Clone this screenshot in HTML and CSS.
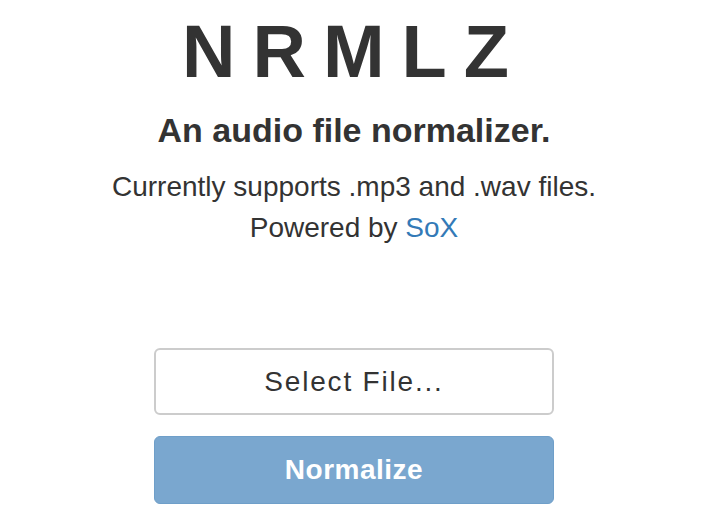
FILE: index.html
```html
<!DOCTYPE html>
<html>
<head>
<meta charset="utf-8">
<link rel="stylesheet" href="styles.css">
</head>
<body>
<main class="page">
  <h1 class="logo">NRMLZ</h1>
  <h2 class="tagline">An audio file normalizer.</h2>
  <p class="info info-first">Currently supports .mp3 and .wav files.</p>
  <p class="info">Powered by <a href="#" class="link">SoX</a></p>
  <div class="actions">
    <button class="btn btn-select">Select File...</button>
    <button class="btn btn-primary" disabled>Normalize</button>
  </div>
</main>
</body>
</html>
```
FILE: styles.css
```css
html, body {
  margin: 0;
  padding: 0;
  background: #fff;
}
body {
  font-family: "Liberation Sans", Arial, sans-serif;
  color: #333;
}
.page {
  width: 708px;
  display: flex;
  flex-direction: column;
  align-items: center;
  text-align: center;
}
.logo {
  margin: 12px 0 0;
  font-size: 74px;
  font-weight: 700;
  line-height: 80px;
  letter-spacing: 17px;
}
.tagline {
  margin: 18px 0 0;
  font-size: 34px;
  font-weight: 700;
  line-height: 40px;
}
.info {
  margin: 0;
  font-size: 28px;
  line-height: 41px;
}
.info-first {
  margin-top: 16px;
}
.link {
  color: #337ab7;
  text-decoration: none;
}
.actions {
  margin-top: 100px;
  display: flex;
  flex-direction: column;
  gap: 21px;
  width: 400px;
}
.btn {
  height: 67px;
  border-radius: 6px;
  font-family: "Liberation Sans", Arial, sans-serif;
  font-size: 28px;
  padding: 0;
}
.btn-select {
  background: #fff;
  border: 2px solid #ccc;
  color: #333;
  letter-spacing: 1.8px;
}
.btn-primary {
  height: 68px;
  background: #7aa7cf;
  border: 1px solid #6f9fc9;
  color: #fff;
  font-weight: 700;
  letter-spacing: 0.5px;
}
```
